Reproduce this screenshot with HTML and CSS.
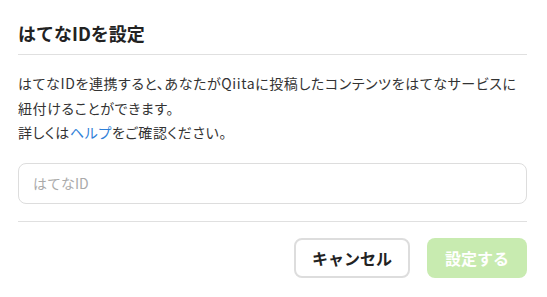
FILE: index.html
```html
<!DOCTYPE html>
<html lang="ja">
<head>
    <meta charset="UTF-8">
    <title>はてなIDを設定</title>
    <link rel="stylesheet" href="styles.css">
</head>
<body>
    <div class="modal">
        <div class="modal-header">
            <h2 class="modal-title">はてなIDを設定</h2>
        </div>

        <div class="modal-body">
            <p class="description">
                はてなIDを連携すると、あなたがQiitaに投稿したコンテンツをはてなサービスに紐付けることができます。<br>
                詳しくは<a href="#" class="link">ヘルプ</a>をご確認ください。
            </p>
            <input class="text-input" type="text" placeholder="はてなID">
        </div>

        <div class="modal-footer">
            <button class="btn btn-cancel">キャンセル</button>
            <button class="btn btn-submit" disabled>設定する</button>
        </div>
    </div>
</body>
</html>
```

FILE: styles.css
```css
body {
    margin: 0;
    background: #fff;
    color: #333;
    font-family: "Noto Sans CJK JP", "Noto Sans", sans-serif;
}

.modal {
    padding: 0 20px 0 18px;
}

.modal-header {
    padding: 20px 0 8px;
    border-bottom: 1px solid #e0e0e0;
}

.modal-title {
    margin: 0;
    font-size: 18px;
    line-height: 26px;
    font-weight: bold;
    color: #222;
}

.modal-body {
    padding: 16px 0 17px;
    border-bottom: 1px solid #e0e0e0;
}

.description {
    margin: 0;
    font-size: 14px;
    line-height: 24.5px;
    letter-spacing: 0.6px;
    font-feature-settings: "palt";
}

.link {
    color: #2f7fd8;
    text-decoration: none;
}

.text-input {
    display: block;
    box-sizing: border-box;
    width: 100%;
    height: 41px;
    margin-top: 18px;
    padding: 0 14px;
    border: 1px solid #ddd;
    border-radius: 8px;
    font-family: inherit;
    font-size: 14px;
    color: #333;
}

.text-input::placeholder {
    color: #aaa;
}

.modal-footer {
    display: flex;
    justify-content: flex-end;
    gap: 17px;
    padding-top: 16px;
}

.btn {
    box-sizing: border-box;
    height: 40px;
    padding: 0 16px;
    border-radius: 8px;
    font-family: inherit;
    font-size: 16px;
    font-weight: bold;
    cursor: pointer;
}

.btn-cancel {
    background: #fff;
    color: #222;
    border: 2px solid #ddd;
}

.btn-submit {
    padding: 0 18px;
    background: #c8ebb0;
    color: #fff;
    border: none;
}
```
